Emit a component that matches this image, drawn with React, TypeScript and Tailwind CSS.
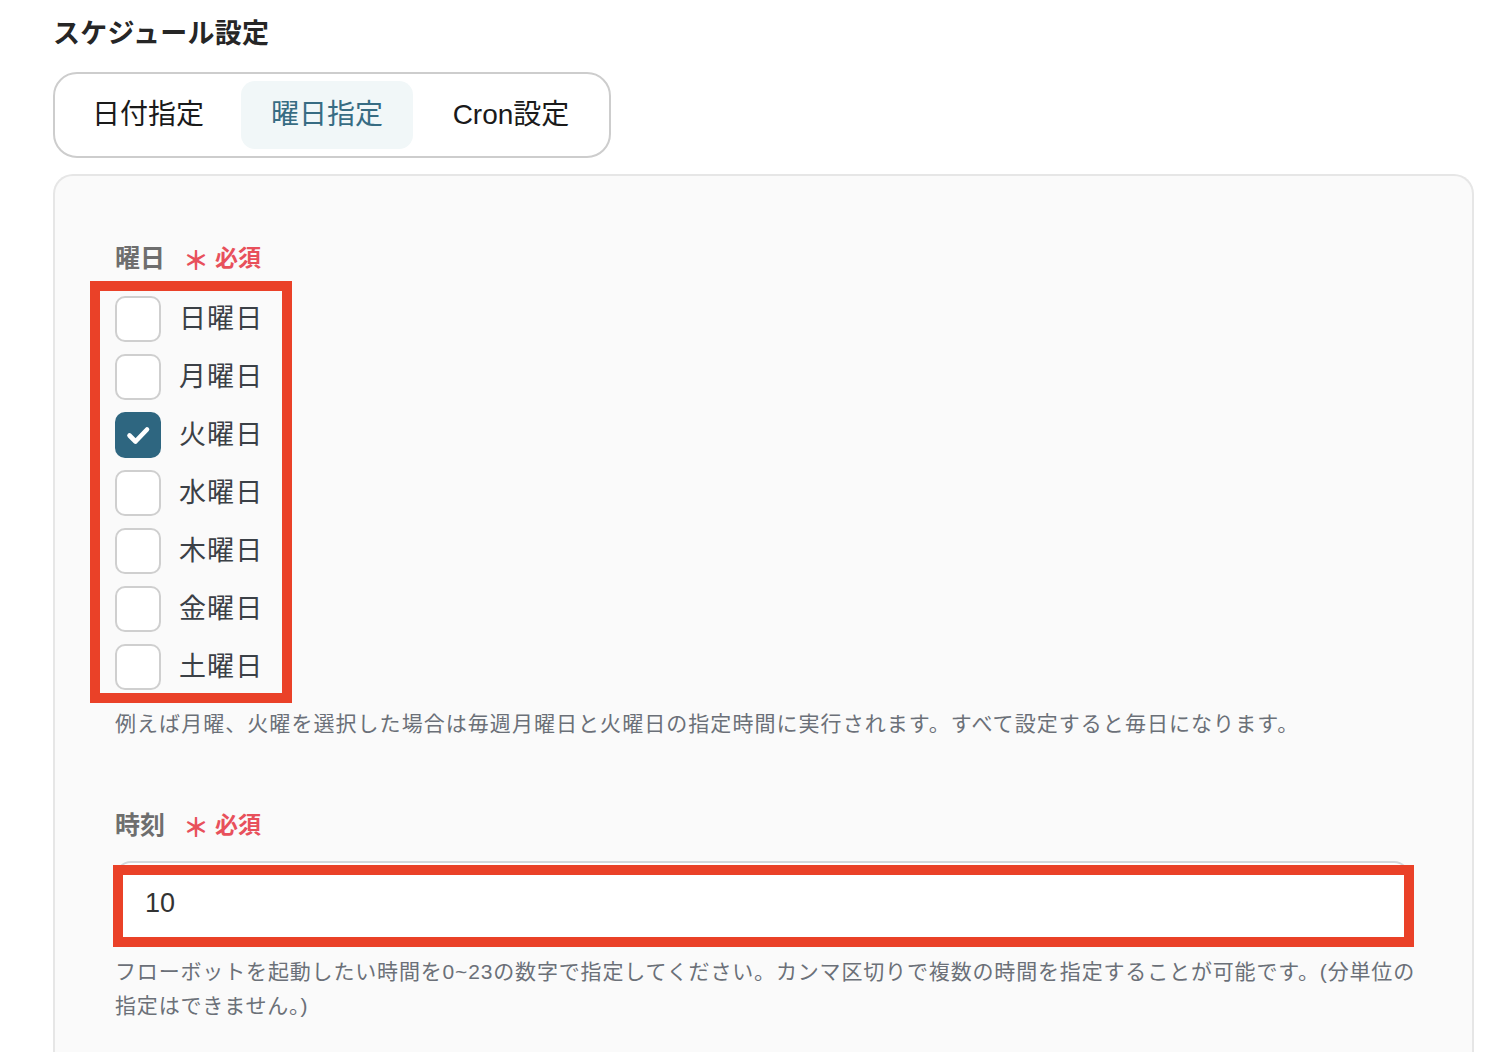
import React from 'react';

const days = [
    { id: 'sun', label: '日曜日', checked: false },
    { id: 'mon', label: '月曜日', checked: false },
    { id: 'tue', label: '火曜日', checked: true },
    { id: 'wed', label: '水曜日', checked: false },
    { id: 'thu', label: '木曜日', checked: false },
    { id: 'fri', label: '金曜日', checked: false },
    { id: 'sat', label: '土曜日', checked: false },
];

const tabs = [
    { id: 'date', label: '日付指定', active: false, width: 'w-[172px]' },
    { id: 'weekday', label: '曜日指定', active: true, width: 'w-[172px]' },
    { id: 'cron', label: 'Cron設定', active: false, width: 'w-[182px]' },
];

function Required() {
    return (
        <span className="ml-[18px] flex items-center text-[23px] font-semibold text-[#e8505b]">
            <span className="mr-[6px] translate-y-[3px] text-[26px] leading-none">＊</span>
            必須
        </span>
    );
}

function Checkbox({ checked }: { checked: boolean }) {
    if (checked) {
        return (
            <div className="h-[46px] w-[46px] rounded-[10px] bg-[#2e6680] flex items-center justify-center">
                <svg width="30" height="30" viewBox="0 0 30 30" fill="none">
                    <path d="M6.5 15.5l6 6L24 9.5" stroke="white" strokeWidth="4.6" strokeLinecap="round" strokeLinejoin="round" />
                </svg>
            </div>
        );
    }
    return <div className="h-[46px] w-[46px] rounded-[10px] border-2 border-[#cfcfcf] bg-white"></div>;
}

export default function App() {
    return (
        <div className="min-h-[1052px] bg-white pl-[53px] pt-[14px] text-[#2a2a2a]" style={{ fontFamily: '"Liberation Sans", "Noto Sans CJK JP", sans-serif' }}>
            <h2 className="text-[27px] font-bold leading-[40px] tracking-[0.01em] text-[#262626]">スケジュール設定</h2>

            <div className="mt-[18px] inline-flex gap-[7px] rounded-[24px] border-2 border-[#cdcdcd] p-[7px]">
                {tabs.map(tab => (
                    <div
                        key={tab.id}
                        className={`flex h-[68px] ${tab.width} items-center justify-center rounded-[14px] text-[28px] ${tab.active ? 'bg-[#f1f7f8] text-[#376c83]' : 'text-[#1a1a1a]'}`}
                    >
                        {tab.label}
                    </div>
                ))}
            </div>

            <div className="mt-[16px] w-[1421px] rounded-t-[20px] border-2 border-b-0 border-[#e6e6e6] bg-[#fafafa] pl-[60px] pr-[60px] pt-[64px] pb-[40px]">
                <div className="flex items-center">
                    <span className="text-[25px] font-bold leading-[36px] text-[#6e6e6e]">曜日</span>
                    <Required />
                </div>

                <div className="relative mt-[20px] w-fit">
                    <div className="flex flex-col gap-[12px]">
                        {days.map(day => (
                            <div key={day.id} className="flex items-center gap-[18px]">
                                <Checkbox checked={day.checked} />
                                <span className="text-[27px] leading-[46px] tracking-[0.04em] text-[#3b4046]">{day.label}</span>
                            </div>
                        ))}
                    </div>
                    <div className="pointer-events-none absolute -left-[25px] -top-[15px] -right-[29px] -bottom-[13px] border-[10px] border-[#ea4128]"></div>
                </div>

                <p className="mt-[17px] text-[21px] leading-[34px] tracking-[0.05em] text-[#6b7078]">
                    例えば月曜、火曜を選択した場合は毎週月曜日と火曜日の指定時間に実行されます。すべて設定すると毎日になります。
                </p>

                <div className="mt-[66px] flex items-center">
                    <span className="text-[25px] font-bold leading-[36px] text-[#6e6e6e]">時刻</span>
                    <Required />
                </div>

                <div className="relative mt-[18px] w-[1295px]">
                    <div className="flex h-[84px] items-center rounded-[16px] border-2 border-[#d4d7db] bg-white px-[28px] text-[27px] text-[#333]">
                        10
                    </div>
                    <div className="pointer-events-none absolute -left-[2px] top-[4px] -right-[4px] -bottom-[2px] border-[10px] border-[#ea4128]"></div>
                </div>

                <p className="mt-[10px] w-[1320px] text-[21px] leading-[34px] tracking-[0.04em] text-[#6b7078]">
                    フローボットを起動したい時間を0~23の数字で指定してください。カンマ区切りで複数の時間を指定することが可能です。(分単位の
                    <br />
                    指定はできません。)
                </p>
            </div>
        </div>
    );
}
